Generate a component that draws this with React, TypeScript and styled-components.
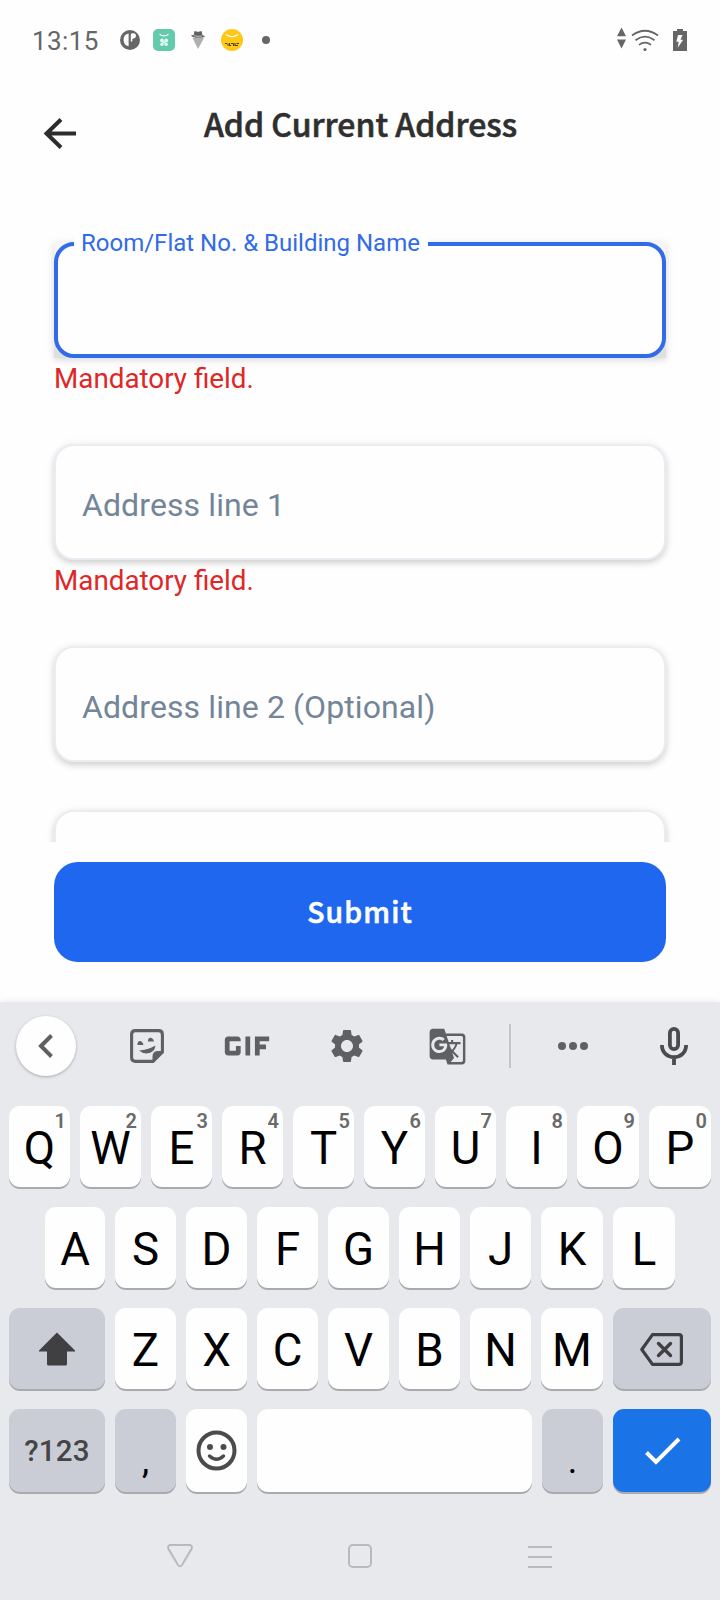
import React from "react";
import styled, { createGlobalStyle } from "styled-components";
import { MdGif, MdSettings, MdGTranslate } from "react-icons/md";

const GlobalStyle = createGlobalStyle`
  * { box-sizing: border-box; }
  body { margin: 0; background: #fefefe; font-family: Roboto, "Liberation Sans", sans-serif; }
`;

const Screen = styled.div`
  width: 720px;
  height: 1600px;
  display: flex;
  flex-direction: column;
  background: #fefefe;
  overflow: hidden;
`;

const StatusBar = styled.div`
  height: 80px;
  padding: 0 32px;
  display: flex;
  align-items: center;
  justify-content: space-between;
`;

const StatusGroup = styled.div`
  display: flex;
  align-items: center;
`;

const Clock = styled.span`
  width: 88px;
  font-size: 26px;
  line-height: 30px;
  letter-spacing: 0.4px;
  color: #666;
  padding-top: 2px;
`;

const Header = styled.header`
  height: 142px;
  display: grid;
  grid-template-columns: 120px 1fr 120px;
  align-items: start;
`;

const BackButton = styled.button`
  margin: 37px 0 0 43px;
  width: 34px;
  height: 34px;
  padding: 0;
  border: 0;
  background: none;
  display: block;
`;

const Title = styled.h1`
  margin: 20px 0 0;
  padding-left: 1px;
  text-align: center;
  white-space: nowrap;
  font: 500 32px/46px "Noto Sans CJK SC", sans-serif;
  -webkit-text-stroke: 0.6px #2f2f2f;
  color: #2f2f2f;
`;

const FormArea = styled.main`
  height: 620px;
  padding: 20px 54px 0;
  overflow: hidden;
`;

const FieldBlock = styled.div<{ $height: number }>`
  height: ${(p) => p.$height}px;
`;

const Field = styled.div`
  height: 116px;
  padding: 5px 0 0 26px;
  display: flex;
  align-items: center;
  border: 2px solid #e9edf2;
  border-radius: 20px;
  background: #fefefe;
  box-shadow: 0 3px 6px rgba(0, 0, 0, 0.15), 0 1px 12px rgba(0, 0, 0, 0.06);
  font-size: 32px;
  letter-spacing: 0.1px;
  color: #748598;
`;

const FocusedShadow = styled.div`
  position: relative;
  height: 116px;
  background: linear-gradient(#f6f6f6, #dedede);
  box-shadow: 0 2px 6px rgba(0, 0, 0, 0.11), 0 1px 12px rgba(0, 0, 0, 0.05);
`;

const FocusedField = styled.div`
  height: 116px;
  border: 4px solid #316be7;
  border-radius: 20px;
  background: #fefefe;
`;

const FloatingLabel = styled.span`
  position: absolute;
  left: 20px;
  top: -14px;
  width: 354px;
  padding-left: 7px;
  background: #fefefe;
  font-size: 24px;
  line-height: 30px;
  white-space: nowrap;
  color: #316be7;
`;

const FieldError = styled.div`
  padding-top: 5px;
  font-size: 27.8px;
  line-height: 32px;
  color: #df2727;
`;

const SubmitArea = styled.div`
  height: 160px;
  padding: 20px 54px 0;
`;

const SubmitButton = styled.button`
  display: block;
  width: 100%;
  height: 100px;
  padding: 0 0 3px;
  border: 0;
  border-radius: 24px;
  background: #1f67ee;
  color: #fefefe;
  font: 500 28.4px/44px "Noto Sans CJK SC", sans-serif;
  -webkit-text-stroke: 0.6px #fefefe;
  letter-spacing: 1.1px;
`;

const Keyboard = styled.section`
  height: 598px;
  background: #e8e9ed;
  box-shadow: 0 -1px 6px rgba(0, 0, 0, 0.08);
`;

const Toolbar = styled.div`
  height: 104px;
  padding: 0 0 16px 16px;
  display: flex;
  align-items: center;
  color: #5f6062;
`;

const RoundButton = styled.div`
  flex: none;
  width: 60px;
  height: 60px;
  border-radius: 50%;
  background: #fefefe;
  box-shadow: 0 1px 3px rgba(0, 0, 0, 0.28);
`;

const Tool = styled.div<{ $width: number }>`
  flex: none;
  width: ${(p) => p.$width}px;
  height: 60px;
  display: flex;
  align-items: center;
  justify-content: center;

  svg { flex: none; }
`;

const Divider = styled.div`
  flex: none;
  width: 2px;
  height: 44px;
  margin-left: 33px;
  background: #c3c5c9;
`;

const Rows = styled.div`
  display: flex;
  flex-direction: column;
  gap: 20px;
`;

const KeyRow = styled.div<{ $cols: string; $inset?: number }>`
  display: grid;
  grid-template-columns: ${(p) => p.$cols};
  column-gap: 10px;
  padding-left: ${(p) => p.$inset ?? 9}px;
`;

const Key = styled.div<{ $tone?: "white" | "grey" | "blue"; $tall?: boolean }>`
  position: relative;
  height: ${(p) => (p.$tall ? 83 : 81)}px;
  display: flex;
  align-items: center;
  justify-content: center;
  border-radius: 11px;
  background: ${(p) => (p.$tone === "grey" ? "#cbcdd6" : p.$tone === "blue" ? "#1b73e8" : "#fefefe")};
  box-shadow: 0 2px 0 #a9aaad;
  font-size: 45.6px;
  line-height: 54px;
  padding-top: 5px;
  color: #000;
`;

const Hint = styled.span`
  position: absolute;
  right: 4px;
  top: 3px;
  font-size: 20px;
  line-height: 24px;
  font-weight: 600;
  color: #6a6a6a;
`;

const ModeLabel = styled.span`
  font-size: 29.5px;
  line-height: 36px;
  font-weight: 500;
  letter-spacing: 0.2px;
  color: #454547;
`;

const Punctuation = styled.span`
  font-size: 36px;
  line-height: 42px;
  padding-top: 20px;
`;

const IconKey = styled(Key)`
  padding-top: 0;
`;

const NavBar = styled.nav`
  height: 106px;
  display: flex;
  align-items: center;
  justify-content: space-between;
  padding: 21px 166px 0;
`;

const topRow = "QWERTYUIOP".split("");
const middleRow = "ASDFGHJKL".split("");
const bottomRow = "ZXCVBNM".split("");

const NotificationIcons = () => (
  <svg width="160" height="30" viewBox="120 25 160 30">
    <circle cx="130" cy="40" r="10" fill="#666" />
    <path d="M128.600 33.500v12.800q-5-.8-5-6.500 0-5.500 5-6.300z" fill="#fefefe" />
    <path d="M130.800 34.800q0-1.500 1.500-1.500h1.200q2.500 0 2.500 2.500t-2.500 2.600q-1.200 0-1.200 1v1.600q0 .8-.8.800t-.7-.8z" fill="#fefefe" />
    <rect x="153" y="29" width="22" height="22" rx="5" fill="#63cbac" />
    <path d="M159.500 34.200q4.500 3.300 9 0" fill="none" stroke="#fff" strokeWidth="1.300" />
    <g fill="#dff7ef"><circle cx="162" cy="40.500" r="1.900" /><circle cx="166.200" cy="40.500" r="1.900" /><circle cx="162" cy="44.300" r="1.700" /><circle cx="166.200" cy="44.300" r="1.700" /><circle cx="164" cy="42.400" r="1.200" /></g>
    <path d="M192.500 38h11.500l-6 11z" fill="#b0b0b0" />
    <path d="M194.500 31l3 .8h1l3-.8 1 4.200q2 .4 2.400 1.200-1 1.400-6.800 1.400t-7-2.300q.6-.8 2.600-.2z" fill="#626262" />
    <path d="M194 35.700q4 1.200 8 .3" stroke="#fefefe" strokeWidth=".6" fill="none" />
    <circle cx="232" cy="40" r="11" fill="#fec816" />
    <path d="M226 34.500q6 4.500 12 0" fill="none" stroke="#fff" strokeWidth="1.200" />
    <path d="M225 43.500h2m1 0v2.300m1.500-2.800v3m1.500-2.500h2.500v2.500m1.500-3v3m1.500-2.500h2.500m-10 2h2m4 0h3" stroke="#4b3a08" strokeWidth="1" fill="none" />
    <circle cx="266" cy="40" r="4" fill="#666" />
  </svg>
);

const SystemIcons = () => (
  <svg width="72" height="30" viewBox="616 25 72 30">
    <path d="M621.500 27.500l4.500 8.700h-9zM621.500 48.500l4.500-8.900h-9z" fill="#666" />
    <g fill="none" stroke="#666" strokeWidth="1.800">
      <path d="M632 35.500q13-9.500 26 0" />
      <path d="M635.500 40.200q9.500-7 19 0" />
      <path d="M639 44.900q6-4.500 12 0" />
    </g>
    <circle cx="645" cy="49.500" r="1.600" fill="#666" />
    <path d="M673 31h4v-2h6v2h4v20h-14z" fill="#666" />
    <path d="M678 35h4.500l-2 4.700h2.700l-5.500 8 1-6h-2.300z" fill="#fefefe" />
  </svg>
);

const StickerIcon = () => (
  <svg width="36" height="36" viewBox="0 0 36 36">
    <path d="M6.500 2.600h23q3.900 0 3.900 3.900v17.500l-9.400 9.400H6.500q-3.900 0-3.900-3.900v-23q0-3.900 3.900-3.900z" fill="none" stroke="currentColor" strokeWidth="3.100" />
    <path d="M34.500 23L23.500 34.500V28.500q0-5.500 5.500-5.500z" fill="currentColor" />
    <path d="M8.500 17c-.5-5.500 5-5.500 6 0q-3 .2-6 0zM19 13.500c-.5-5 5-5 6 0q-3-.2-6 0z" fill="currentColor" />
    <path d="M10 22.500q8.500-.4 16.500-5-.8 7.400-8.700 7.900-4.500 0-7.800-2.900z" fill="currentColor" />
  </svg>
);

const MicIcon = () => (
  <svg width="30" height="40" viewBox="0 0 30 40" fill="none" stroke="#4a4b4d" strokeWidth="3.800">
    <rect x="10.900" y="2.900" width="8.200" height="20.200" rx="4.100" />
    <path d="M2.900 19c0 7.400 5.400 12.100 12.100 12.100S27.100 26.400 27.100 19M15 31v8" />
  </svg>
);

export default function App() {
  return (
    <>
      <GlobalStyle />
      <Screen>
        <StatusBar>
          <StatusGroup>
            <Clock>13:15</Clock>
            <NotificationIcons />
          </StatusGroup>
          <SystemIcons />
        </StatusBar>
        <Header>
          <BackButton aria-label="Back">
            <svg width="34" height="34" viewBox="0 0 34 34" fill="none" stroke="#2c2c2c" strokeWidth="4">
              <path d="M18 2.500L3.500 16.500 18 30.500M3.500 16.500H33" />
            </svg>
          </BackButton>
          <Title>Add Current Address</Title>
        </Header>
        <FormArea>
          <FieldBlock $height={202}>
            <FocusedShadow>
              <FocusedField />
              <FloatingLabel>Room/Flat No. &amp; Building Name</FloatingLabel>
            </FocusedShadow>
            <FieldError>Mandatory field.</FieldError>
          </FieldBlock>
          <FieldBlock $height={202}>
            <Field>Address line 1</Field>
            <FieldError>Mandatory field.</FieldError>
          </FieldBlock>
          <FieldBlock $height={164}>
            <Field>Address line 2 (Optional)</Field>
          </FieldBlock>
          <Field />
        </FormArea>
        <SubmitArea>
          <SubmitButton>Submit</SubmitButton>
        </SubmitArea>
        <Keyboard>
          <Toolbar>
            <RoundButton>
              <svg width="60" height="60" viewBox="0 0 60 60" fill="none" stroke="currentColor" strokeWidth="4">
                <path d="M35.500 19.500L25 30l10.500 10.500" />
              </svg>
            </RoundButton>
            <Tool $width={142}><StickerIcon /></Tool>
            <Tool $width={58}><MdGif size={76} /></Tool>
            <Tool $width={142}><MdSettings size={40} /></Tool>
            <Tool $width={58}><MdGTranslate size={39} /></Tool>
            <Divider />
            <Tool $width={124}>
              <svg width="32" height="10" viewBox="0 0 32 10" fill="currentColor">
                <circle cx="5" cy="5" r="4" /><circle cx="16" cy="5" r="4" /><circle cx="27" cy="5" r="4" />
              </svg>
            </Tool>
            <Tool $width={78}><MicIcon /></Tool>
          </Toolbar>
          <Rows>
            <KeyRow $cols="repeat(8, 61px) 62px 62px">
              {topRow.map((letter, i) => (
                <Key key={letter}>
                  {letter}
                  <Hint>{(i + 1) % 10}</Hint>
                </Key>
              ))}
            </KeyRow>
            <KeyRow $cols="60px repeat(6, 61px) 62px 62px" $inset={45}>
              {middleRow.map((letter) => <Key key={letter}>{letter}</Key>)}
            </KeyRow>
            <KeyRow $cols="96px repeat(6, 61px) 62px 98px">
              <IconKey $tone="grey">
                <svg width="40" height="40" viewBox="0 0 40 40" fill="#404042">
                  <path d="M20 3.500L38 21.500v1H30V35q0 1.500-1.500 1.500h-17Q10 36.500 10 35V22.500H2v-1z" />
                </svg>
              </IconKey>
              {bottomRow.map((letter) => <Key key={letter}>{letter}</Key>)}
              <IconKey $tone="grey">
                <svg width="46" height="40" viewBox="0 0 46 40" fill="none" stroke="#404042" strokeWidth="3.200" strokeLinejoin="round">
                  <path d="M13.500 5.600h26.500q2.400 0 2.400 2.400v25q0 2.400-2.400 2.400H13.500L2.800 20.500z" />
                  <path d="M19.500 14.500l12 12m0-12l-12 12" strokeLinecap="round" strokeWidth="3.400" />
                </svg>
              </IconKey>
            </KeyRow>
            <KeyRow $cols="96px 61px 61px 275px 61px 98px">
              <IconKey $tone="grey" $tall><ModeLabel>?123</ModeLabel></IconKey>
              <IconKey $tone="grey" $tall><Punctuation>,</Punctuation></IconKey>
              <IconKey $tall>
                <svg width="42" height="42" viewBox="0 0 42 42" fill="none" stroke="#4b4b4d">
                  <circle cx="20.500" cy="20.500" r="18" strokeWidth="4" />
                  <path d="M13.500 26q7 6.500 14 0" strokeWidth="3.400" strokeLinecap="round" />
                  <g fill="#4b4b4d" stroke="none"><circle cx="14" cy="17" r="3" /><circle cx="27.500" cy="17" r="3" /></g>
                </svg>
              </IconKey>
              <IconKey $tall />
              <IconKey $tone="grey" $tall><Punctuation>.</Punctuation></IconKey>
              <IconKey $tone="blue" $tall>
                <svg width="40" height="40" viewBox="0 0 40 40" fill="none" stroke="#fefefe" strokeWidth="4">
                  <path d="M4.500 21.500l9.500 9.500L37 8" />
                </svg>
              </IconKey>
            </KeyRow>
          </Rows>
          <NavBar>
            <svg width="28" height="28" viewBox="0 0 28 28" fill="none" stroke="#bababc" strokeWidth="2">
              <path d="M4.500 3h19q3.500.5 2 4l-9.500 16q-2 2.500-4 0L2.500 7q-1.500-3.500 2-4z" />
            </svg>
            <svg width="26" height="26" viewBox="0 0 26 26" fill="none" stroke="#bababc" strokeWidth="2">
              <rect x="2" y="2" width="22" height="22" rx="4" />
            </svg>
            <svg width="28" height="26" viewBox="0 0 28 26" fill="none" stroke="#bababc" strokeWidth="2">
              <path d="M2 4h24M2 14h24M2 24h24" />
            </svg>
          </NavBar>
        </Keyboard>
      </Screen>
    </>
  );
}
